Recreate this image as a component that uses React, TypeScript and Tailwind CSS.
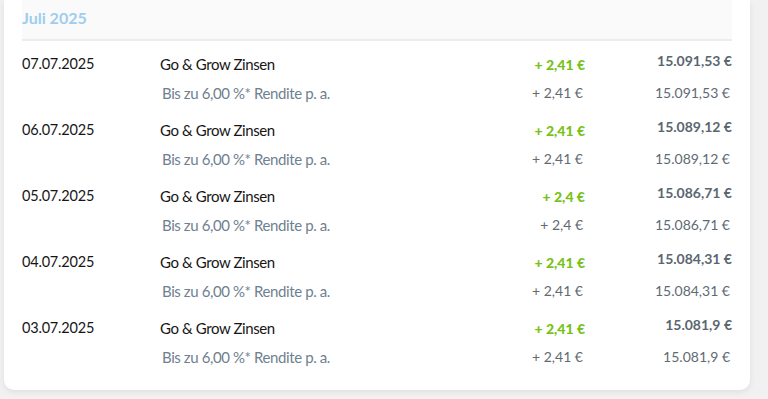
import React from "react";

const rows = [
  { date: "07.07.2025", amount: "+ 2,41 €", balance: "15.091,53 €" },
  { date: "06.07.2025", amount: "+ 2,41 €", balance: "15.089,12 €" },
  { date: "05.07.2025", amount: "+ 2,4 €", balance: "15.086,71 €" },
  { date: "04.07.2025", amount: "+ 2,41 €", balance: "15.084,31 €" },
  { date: "03.07.2025", amount: "+ 2,41 €", balance: "15.081,9 €" },
];

export default function App() {
  return (
    <div
      className="h-[399px] w-[768px] overflow-hidden bg-[#f1f1f1]"
      style={{ fontFamily: "Lato, 'Noto Sans', sans-serif" }}
    >
      <div className="ml-[4px] w-[746px] rounded-b-[10px] bg-white px-[18px] pb-[19px] shadow-[0_2px_6px_rgba(0,0,0,0.08)]">
        <div className="flex h-[41px] items-start border-b-[2px] border-[#ececec] bg-[#fafafa] pt-[8px]">
          <span className="text-[16px] font-bold leading-[20px] text-[#9ecdf0]">Juli 2025</span>
        </div>
        {rows.map((r) => (
          <div key={r.date} className="pt-[13px] pb-[4px]">
            <div className="grid h-[20px] grid-cols-[138px_1fr_160px_147px] items-start">
              <span className="text-[14.5px] leading-[20px] tracking-[-0.2px] text-[#161616]">{r.date}</span>
              <span className="text-[15px] leading-[20px] tracking-[-0.4px] text-[#161616]">Go &amp; Grow Zinsen</span>
              <span className="text-right text-[14px] font-black leading-[22px] text-[#77c216]">{r.amount}</span>
              <span className="text-right text-[14px] font-bold leading-[14px] text-[#5a6670]">{r.balance}</span>
            </div>
            <div className="mt-[9px] grid h-[20px] grid-cols-[138px_1fr_160px_147px] items-start">
              <span />
              <span className="pl-[2px] text-[15px] leading-[20px] tracking-[-0.4px] text-[#6f8190]">Bis zu 6,00 %* Rendite p. a.</span>
              <span className="pr-[2px] text-right text-[14px] leading-[20px] text-[#5f6a74]">{r.amount}</span>
              <span className="pr-[2px] text-right text-[14px] leading-[20px] text-[#5f6a74]">{r.balance}</span>
            </div>
          </div>
        ))}
      </div>
    </div>
  );
}
